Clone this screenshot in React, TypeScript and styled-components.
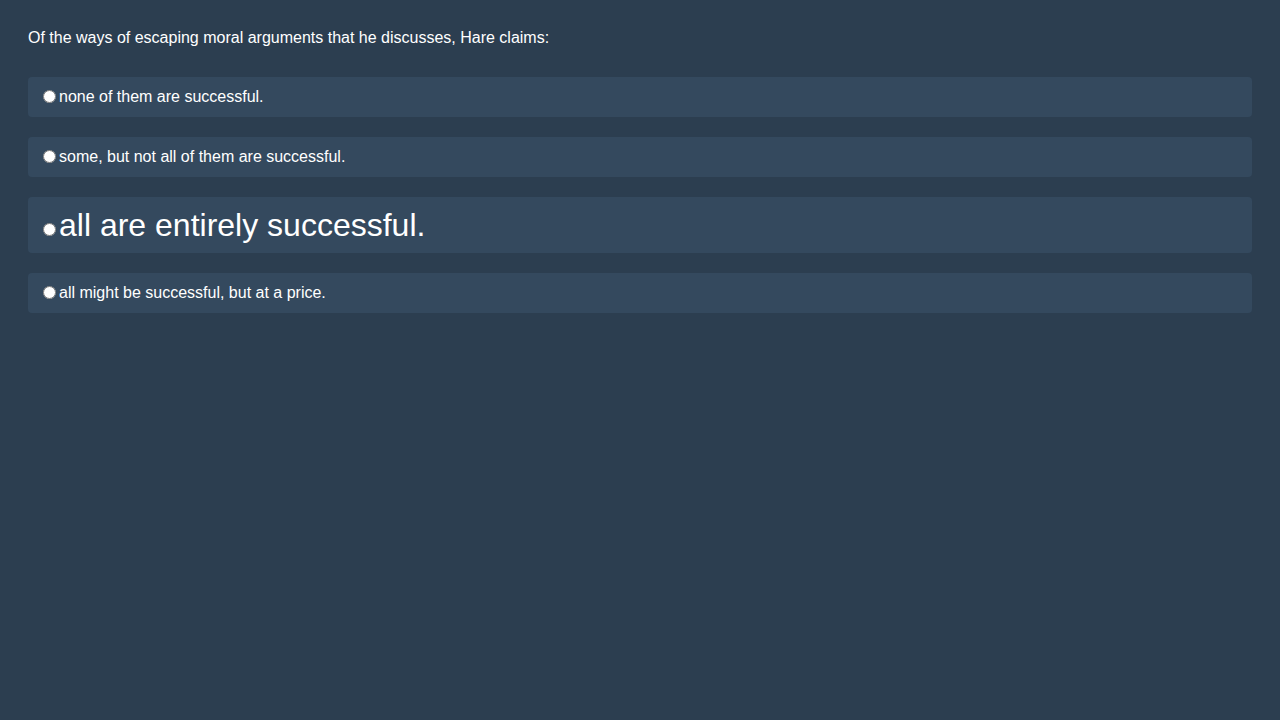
import React from "react";
import styled, { createGlobalStyle } from "styled-components";

const Global = createGlobalStyle`
  html, body { margin: 0; padding: 0; background: #2c3e50; }
  body { font-family: "Liberation Sans", Arial, sans-serif; color: #fff; min-height: 720px; }
`;

const Page = styled.div`
  padding: 28px;
  display: flex;
  flex-direction: column;
`;

const Question = styled.p`
  margin: 0 0 30px;
  font-size: 16px;
  line-height: 19px;
`;

const Options = styled.div`
  display: flex;
  flex-direction: column;
  gap: 20px;
`;

const Option = styled.label<{ $big?: boolean }>`
  display: block;
  background: #34495e;
  border-radius: 4px;
  padding: 10px;
  font-size: ${(p) => (p.$big ? "32px" : "16px")};
  line-height: ${(p) => (p.$big ? "36px" : "20px")};
  cursor: pointer;
`;

const Radio = styled.input<{ $big?: boolean }>`
  margin: ${(p) => (p.$big ? "0 3px 0 5px" : "3px 3px 0 5px")};
  vertical-align: ${(p) => (p.$big ? "baseline" : "top")};
`;

const items = [
  { text: "none of them are successful.", big: false },
  { text: "some, but not all of them are successful.", big: false },
  { text: "all are entirely successful.", big: true },
  { text: "all might be successful, but at a price.", big: false },
];

export default function App() {
  return (
    <>
      <Global />
      <Page>
        <Question>Of the ways of escaping moral arguments that he discusses, Hare claims:</Question>
        <Options>
          {items.map((it, i) => (
            <Option key={i} $big={it.big}>
              <Radio type="radio" name="q" $big={it.big} />
              {it.text}
            </Option>
          ))}
        </Options>
      </Page>
    </>
  );
}
